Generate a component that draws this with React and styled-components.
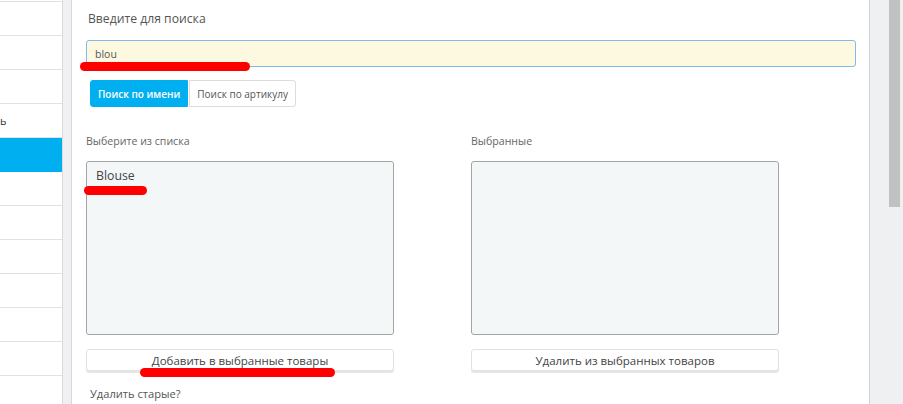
import React from "react";
import styled, { createGlobalStyle } from "styled-components";

const GlobalStyle = createGlobalStyle`
  html, body {
    margin: 0;
    padding: 0;
    background: #eff0f2;
    font-family: "Open Sans", "Liberation Sans", sans-serif;
    overflow: hidden;
  }
`;

const sideRows = ["", "", "", "ь", "active", "", "", "", "", "", ""];

export default function App() {
  return (
    <Page>
      <GlobalStyle />
      <Sidebar>
        <SideTop />
        {sideRows.map((r, i) => (
          <SideRow key={i} $active={r === "active"}>
            {r !== "active" && r}
          </SideRow>
        ))}
      </Sidebar>
      <Panel>
        <Heading>Введите для поиска</Heading>
        <InputWrap>
          <SearchInput defaultValue="blou" />
          <Stroke $left={-6} $top={22} $width={170} />
        </InputWrap>
        <ButtonGroup>
          <ToggleButton $active>Поиск по имени</ToggleButton>
          <ToggleButton>Поиск по артикулу</ToggleButton>
        </ButtonGroup>
        <Columns>
          <Column>
            <Label>Выберите из списка</Label>
            <ListBox>
              <ListItem>
                Blouse
                <Stroke $left={-12} $top={19} $width={63} />
              </ListItem>
            </ListBox>
            <ActionWrap>
              <ActionButton>Добавить в выбранные товары</ActionButton>
              <Stroke $left={54} $top={19} $width={195} />
            </ActionWrap>
          </Column>
          <Column>
            <Label>Выбранные</Label>
            <ListBox />
            <ActionWrap>
              <ActionButton>Удалить из выбранных товаров</ActionButton>
            </ActionWrap>
          </Column>
        </Columns>
        <Footer>Удалить старые?</Footer>
      </Panel>
      <Gutter>
        <ScrollThumb />
      </Gutter>
    </Page>
  );
}

/*STYLES*/
const Page = styled.div`
  display: flex;
  height: 404px;
  width: 903px;
  overflow: hidden;
`;

const Sidebar = styled.div`
  width: 62px;
  flex: none;
  background: #fff;
  border-right: 1px solid #dcdcdc;
  margin-right: 8px;
`;

const SideTop = styled.div`
  height: 1px;
  border-bottom: 1px solid #e2e2e2;
`;

const SideRow = styled.div`
  height: 33px;
  border-bottom: 1px solid ${(p) => (p.$active ? "#00aff0" : "#e2e2e2")};
  background: ${(p) => (p.$active ? "#00aff0" : "#fff")};
  font-size: 11px;
  color: #333;
  line-height: 33px;
`;

const Panel = styled.div`
  flex: none;
  box-sizing: border-box;
  width: 799px;
  background: #fff;
  border-left: 1px solid #d8d8d8;
  border-right: 1px solid #d3d3d3;
  padding: 10px 13px 0 14px;
`;

const Heading = styled.div`
  font-size: 12.2px;
  line-height: 18px;
  color: #555;
  padding-left: 2px;
  margin-bottom: 12px;
`;

const InputWrap = styled.div`
  position: relative;
`;

const SearchInput = styled.input`
  display: block;
  box-sizing: border-box;
  width: 100%;
  height: 27px;
  background: #fdf9e1;
  border: 1px solid #7ebbeb;
  border-radius: 3px;
  padding: 0 8px;
  font-family: inherit;
  font-size: 10.5px;
  color: #555;
  outline: none;
`;

const Stroke = styled.span`
  position: absolute;
  left: ${(p) => p.$left}px;
  top: ${(p) => p.$top}px;
  width: ${(p) => p.$width}px;
  height: 9px;
  border-radius: 5px;
  background: #ff0000;
`;

const ButtonGroup = styled.div`
  display: flex;
  margin: 13px 0 0 4px;
`;

const ToggleButton = styled.button`
  height: 27px;
  box-sizing: border-box;
  padding: 0 7px;
  font-family: inherit;
  font-size: 10px;
  font-weight: ${(p) => (p.$active ? 600 : 400)};
  color: ${(p) => (p.$active ? "#fff" : "#555")};
  background: ${(p) => (p.$active ? "#00aff0" : "#fff")};
  border: 1px solid ${(p) => (p.$active ? "#00aff0" : "#dcdcdc")};
  border-radius: ${(p) => (p.$active ? "3px 0 0 3px" : "0 3px 3px 0")};
  margin-left: ${(p) => (p.$active ? "0" : "1px")};
`;

const Columns = styled.div`
  display: grid;
  grid-template-columns: 308px 308px;
  column-gap: 77px;
  margin-top: 26px;
`;

const Column = styled.div`
  display: flex;
  flex-direction: column;
`;

const Label = styled.div`
  font-size: 10.6px;
  line-height: 16px;
  color: #666;
  margin-bottom: 12px;
`;

const ListBox = styled.div`
  box-sizing: border-box;
  height: 174px;
  background: #f4f7f8;
  border: 1px solid #a4a4a4;
  border-radius: 3px;
  padding: 1px 9px;
`;

const ListItem = styled.div`
  position: relative;
  display: inline-block;
  font-size: 12.3px;
  line-height: 18px;
  color: #444;
`;

const ActionWrap = styled.div`
  position: relative;
  margin-top: 14px;
`;

const ActionButton = styled.button`
  display: block;
  box-sizing: border-box;
  width: 100%;
  height: 22px;
  background: #fff;
  border: 1px solid #e2e2e2;
  border-radius: 3px;
  box-shadow: 0 2px 0 #e6e6e6;
  font-family: inherit;
  font-size: 11.5px;
  color: #444;
  padding: 0;
`;

const Footer = styled.div`
  margin: 14px 0 0 4px;
  font-size: 11.1px;
  line-height: 17px;
  color: #555;
`;

const Gutter = styled.div`
  flex: 1;
  background: #eff0f2;
  padding-left: 19px;
`;

const ScrollThumb = styled.div`
  width: 11px;
  height: 207px;
  background: #c1c1c1;
`;
